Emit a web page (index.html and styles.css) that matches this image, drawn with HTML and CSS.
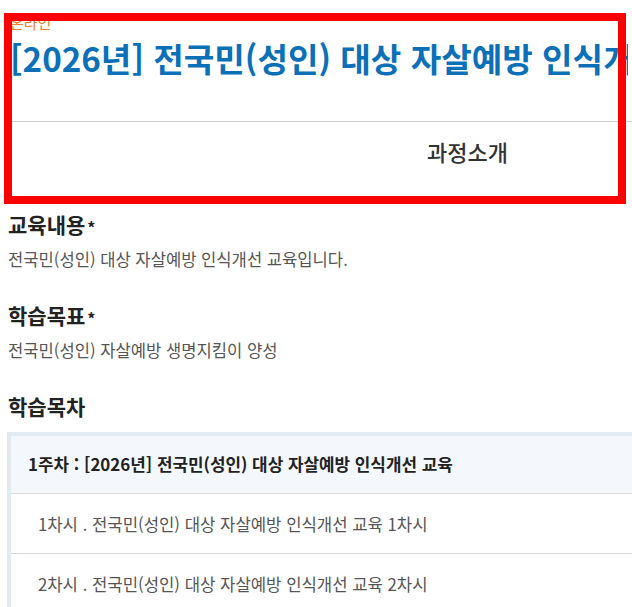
FILE: index.html
```html
<!DOCTYPE html>
<html lang="ko">
<head>
<meta charset="utf-8">
<title>과정소개</title>
<link rel="stylesheet" href="styles.css">
</head>
<body>
<div class="page">
  <header class="course-head">
    <div class="cat">온라인</div>
    <h1 class="title">[2026년] 전국민(성인) 대상 자살예방 인식개선 교육</h1>
  </header>
  <nav class="tabs">
    <a class="tab active" href="#intro">과정소개</a>
  </nav>
  <section class="info" id="intro">
    <h2 class="info-title">교육내용<span class="req">*</span></h2>
    <p class="info-text">전국민(성인) 대상 자살예방 인식개선 교육입니다.</p>
    <h2 class="info-title">학습목표<span class="req">*</span></h2>
    <p class="info-text">전국민(성인) 자살예방 생명지킴이 양성</p>
    <h2 class="info-title">학습목차</h2>
    <div class="toc">
      <div class="toc-week">1주차 : [2026년] 전국민(성인) 대상 자살예방 인식개선 교육</div>
      <ul class="toc-list">
        <li class="toc-item">1차시 . 전국민(성인) 대상 자살예방 인식개선 교육 1차시</li>
        <li class="toc-item">2차시 . 전국민(성인) 대상 자살예방 인식개선 교육 2차시</li>
      </ul>
    </div>
  </section>
  <div class="highlight"></div>
</div>
</body>
</html>
```
FILE: styles.css
```css
html, body {
  margin: 0;
  padding: 0;
  background: #fff;
}
body {
  overflow-x: hidden;
  font-family: "Noto Sans CJK KR", "Noto Sans", sans-serif;
  color: #333;
}
.page {
  position: relative;
  width: 930px;
  padding-left: 8px;
}
.course-head {
  margin-left: 2px;
  width: 915px;
  padding-top: 13px;
  padding-bottom: 43px;
  border-bottom: 1px solid #cfcfcf;
}
.cat {
  font-size: 15px;
  line-height: 20px;
  color: #f0802a;
}
.title {
  margin: 5px 0 0;
  max-width: 618px;
  overflow: hidden;
  white-space: nowrap;
  font-size: 33.2px;
  line-height: 40px;
  font-weight: 700;
  color: #0b70b8;
}
.tabs {
  margin-left: 2px;
  width: 915px;
  display: flex;
  justify-content: center;
  padding: 15px 0 32px;
}
.tab {
  font-size: 22px;
  line-height: 28px;
  font-weight: 500;
  color: #333;
  text-decoration: none;
}
.info {
  padding-top: 14px;
}
.info-title {
  margin: 0;
  font-size: 21px;
  line-height: 27px;
  font-weight: 700;
  color: #222;
}
.req {
  margin-left: 2px;
  font-size: 16px;
  line-height: 0;
  vertical-align: -1px;
}
.info-text {
  margin: 9px 0 31px;
  font-size: 16.6px;
  line-height: 24px;
  color: #555;
}
.toc {
  margin: 12px 0 0 -1px;
  border: 4px solid #e2eaf2;
  border-right: none;
}
.toc-week {
  padding: 16px 20px 17px 17px;
  font-size: 16.9px;
  line-height: 24px;
  font-weight: 700;
  color: #222;
  background: #f4f8fc;
  border-bottom: 1px solid #dadada;
}
.toc-list {
  margin: 0;
  padding: 0;
  list-style: none;
}
.toc-item {
  padding: 18px 20px 17px 27px;
  font-size: 16.7px;
  line-height: 24px;
  color: #555;
  border-bottom: 1px solid #dadada;
}
.highlight {
  position: absolute;
  left: 4px;
  top: 13px;
  width: 622px;
  height: 191px;
  box-sizing: border-box;
  border: 8px solid #ff0000;
  pointer-events: none;
}
```
